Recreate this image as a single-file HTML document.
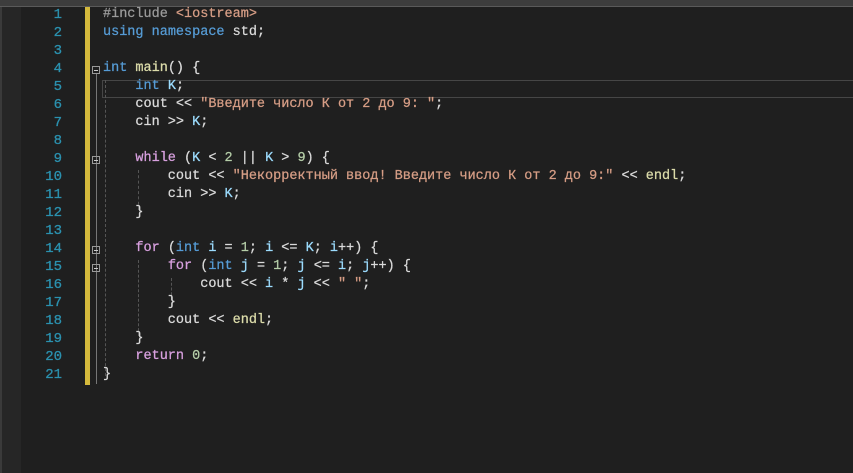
<!DOCTYPE html>
<html><head><meta charset="utf-8"><style>
body{margin:0;width:853px;height:473px;background:#1f1f1f;overflow:hidden;position:relative;font-family:"Liberation Mono","DejaVu Sans Mono",monospace;font-size:13.5px}
.top{position:absolute;left:0;top:0;width:853px;height:6px;background:#3d3d3d;border-bottom:1px solid #5a5a5a}
.left{position:absolute;left:0;top:7px;width:21px;height:466px;background:#262626;border-left:2px solid #3a3a3a;box-sizing:border-box}
.ln{position:absolute;left:40px;width:22px;text-align:right;color:#2b91af;-webkit-text-stroke:0.3px #2b91af;font-size:14px}
.code{position:absolute;left:103px;white-space:pre;color:#dadada;-webkit-text-stroke:0.25px currentColor}
.code span{-webkit-text-stroke:0.25px currentColor}
.yb{position:absolute;left:85px;top:7px;width:5px;height:378px;background:#d4b93c}
.cur{position:absolute;left:102px;top:80px;width:760px;height:16px;border:1px solid #464646}
.k{color:#569cd6}.c{color:#d8a0df}.s{color:#d69d85}.n{color:#b5cea8}.f{color:#dcdcaa}.v{color:#9cdcfe}.p{color:#9b9b9b}
.fold{position:absolute;width:8px;height:8px;border:1px solid #999;box-sizing:border-box;left:92px}
.fold:after{content:"";position:absolute;left:1px;top:3px;width:4px;height:1px;background:#ccc}
.vl{position:absolute;border-left:1px dashed #555}
.gl{position:absolute;left:96px;width:1px;background:#777}
</style></head><body>
<div class="top"></div><div class="left"></div>
<div class="yb"></div>
<div class="cur"></div>
<div class="ln" style="top:7px">1</div><div class="ln" style="top:25px">2</div><div class="ln" style="top:43px">3</div><div class="ln" style="top:61px">4</div><div class="ln" style="top:79px">5</div><div class="ln" style="top:97px">6</div><div class="ln" style="top:115px">7</div><div class="ln" style="top:133px">8</div><div class="ln" style="top:151px">9</div><div class="ln" style="top:169px">10</div><div class="ln" style="top:187px">11</div><div class="ln" style="top:205px">12</div><div class="ln" style="top:223px">13</div><div class="ln" style="top:241px">14</div><div class="ln" style="top:259px">15</div><div class="ln" style="top:277px">16</div><div class="ln" style="top:295px">17</div><div class="ln" style="top:313px">18</div><div class="ln" style="top:331px">19</div><div class="ln" style="top:349px">20</div><div class="ln" style="top:367px">21</div>
<div class="gl" style="top:74px;height:310px"></div>
<div class="fold" style="top:66px"></div><div class="fold" style="top:156px"></div><div class="fold" style="top:246px"></div><div class="fold" style="top:264px"></div>
<div class="vl" style="left:105px;top:80px;height:296px"></div>
<div class="vl" style="left:138px;top:170px;height:40px"></div>
<div class="vl" style="left:138px;top:260px;height:76px"></div>
<div class="vl" style="left:171px;top:278px;height:22px"></div>
<div class="code" style="top:7px"><span class="p">#include</span> <span class="s">&lt;iostream&gt;</span></div>
<div class="code" style="top:25px"><span class="k">using</span> <span class="k">namespace</span> std;</div>
<div class="code" style="top:61px"><span class="k">int</span> <span class="f">main</span>() {</div>
<div class="code" style="top:79px">    <span class="k">int</span> <span class="v">K</span>;</div>
<div class="code" style="top:97px">    cout &lt;&lt; <span class="s">"Введите число К от 2 до 9: "</span>;</div>
<div class="code" style="top:115px">    cin &gt;&gt; <span class="v">K</span>;</div>
<div class="code" style="top:151px">    <span class="c">while</span> (<span class="v">K</span> &lt; <span class="n">2</span> || <span class="v">K</span> &gt; <span class="n">9</span>) {</div>
<div class="code" style="top:169px">        cout &lt;&lt; <span class="s">"Некорректный ввод! Введите число К от 2 до 9:"</span> &lt;&lt; <span class="f">endl</span>;</div>
<div class="code" style="top:187px">        cin &gt;&gt; <span class="v">K</span>;</div>
<div class="code" style="top:205px">    }</div>
<div class="code" style="top:241px">    <span class="c">for</span> (<span class="k">int</span> <span class="v">i</span> = <span class="n">1</span>; <span class="v">i</span> &lt;= <span class="v">K</span>; <span class="v">i</span>++) {</div>
<div class="code" style="top:259px">        <span class="c">for</span> (<span class="k">int</span> <span class="v">j</span> = <span class="n">1</span>; <span class="v">j</span> &lt;= <span class="v">i</span>; <span class="v">j</span>++) {</div>
<div class="code" style="top:277px">            cout &lt;&lt; <span class="v">i</span> * <span class="v">j</span> &lt;&lt; <span class="s">" "</span>;</div>
<div class="code" style="top:295px">        }</div>
<div class="code" style="top:313px">        cout &lt;&lt; <span class="f">endl</span>;</div>
<div class="code" style="top:331px">    }</div>
<div class="code" style="top:349px">    <span class="c">return</span> <span class="n">0</span>;</div>
<div class="code" style="top:367px">}</div>
</body></html>
